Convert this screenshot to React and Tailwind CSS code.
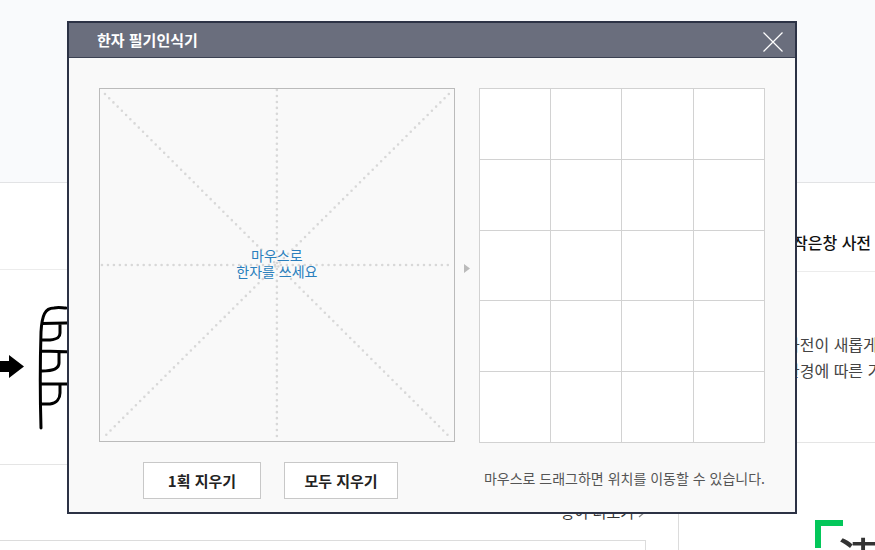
import React from 'react';

const guideLines = [
  { x1: 5, y1: 5, x2: 351, y2: 349 },
  { x1: 351, y1: 5, x2: 5, y2: 349 },
  { x1: 178, y1: 1, x2: 178, y2: 352 },
  { x1: 2, y1: 177, x2: 354, y2: 177 }
];

const CloseIcon = () => (
  <svg className="block h-5 w-5" viewBox="0 0 20 20" fill="none" stroke="currentColor" strokeWidth="1.2">
    <path d="M0.5 0.5L19.5 19.5M19.5 0.5L0.5 19.5" />
  </svg>
);

const Glyph = () => (
  <svg className="block h-[126px] w-[90px]" viewBox="0 0 90 126" fill="none">
    <path d="M0 56H9V50L24 61.5L9 73V67H0Z" fill="#000" />
    <path
      d="M41 123C40 90 40 60 41 27C42 10 45 3 54 3C59 2 62 3 66 3M42 18.5L90 17.5M42 35H50C58 34 60 32 60 28V19M42 46L90 47.5M42 66C54 66 59 63 59 58V48M42 79H90M42 99H50C57 98 60 93 60 88V80"
      stroke="#000"
      strokeWidth="3"
      strokeLinecap="round"
    />
  </svg>
);

const PageBehind = () => (
  <div>
    <div className="h-[183px] border-b border-[#e2e3e5] bg-[#f9fafc]" />
    <div className="flex">
      <main className="min-w-0 flex-1">
        <div className="h-[87px] border-b border-[#ececec]" />
        <div className="flex h-[195px] items-center border-b border-[#e5e5e5] pt-0.5">
          <Glyph />
        </div>
        <div className="pr-8 pt-[37px]">
          <div className="flex justify-end">
            <a href="#more" className="flex items-center gap-1 text-[15px] leading-5 text-[#333]">
              용어 더보기
              <svg className="h-3 w-2" viewBox="0 0 8 12" fill="none" stroke="#888" strokeWidth="1.3">
                <path d="M1 1L7 6L1 11" />
              </svg>
            </a>
          </div>
          <div className="mt-[18px] h-40 border-r border-t border-[#dcdcdc]" />
        </div>
      </main>
      <aside className="w-[197px] overflow-hidden whitespace-nowrap border-l border-[#dcdcdc]">
        <h2 className="flex h-[89px] items-center border-b border-[#ececec] pl-[114px] pt-[30px] text-base font-medium leading-6 text-[#111]">
          작은창 사전
        </h2>
        <p className="h-[171px] border-b border-[#e5e5e5] pl-[106px] pt-[59px] text-base leading-[26px] text-[#444]">
          사전이 새롭게
          <br />
          환경에 따른 기
        </p>
        <div className="flex pl-[136px] pt-[77px]">
          <div className="h-7 w-7 shrink-0 border-l-[6px] border-t-[6px] border-[#03c75a]" />
          <span className="-ml-2 pt-2.5 text-[58px] leading-[64px] text-[#333]">漢</span>
        </div>
      </aside>
    </div>
  </div>
);

const DrawingPad = () => (
  <div className="relative h-[354px] flex-[356_1_0%] border border-[#bbb]">
    <svg
      className="block h-full w-full"
      viewBox="0 0 356 354"
      preserveAspectRatio="none"
      stroke="#d8d8d8"
      strokeWidth="2.6"
      strokeLinecap="round"
      strokeDasharray="0 6"
    >
      {guideLines.map((line, i) => (
        <line key={i} {...line} />
      ))}
    </svg>
    <p className="absolute inset-0 flex items-center justify-center pb-1 text-center text-sm leading-4 text-[#2a7fbd]">
      <span>
        마우스로
        <br />
        한자를 쓰세요
      </span>
    </p>
  </div>
);

const Candidates = () => (
  <div className="grid h-[355px] flex-[286_1_0%] grid-cols-4 grid-rows-5 gap-px border border-[#d2d2d2] bg-[#d2d2d2]">
    {Array.from({ length: 20 }, (_, i) => (
      <div key={i} className="bg-white" />
    ))}
  </div>
);

const buttonClass =
  'h-[37px] border border-[#c8c8c8] bg-white text-[15px] font-bold leading-5 text-[#222]';

const Recognizer = () => (
  <section
    role="dialog"
    aria-labelledby="recognizer-title"
    className="w-full max-w-[730px] border-2 border-[#2c3245] bg-[#f9f9f9]"
  >
    <header className="flex h-[35px] items-center justify-between border-b border-[#3b4152] bg-[#6a6e7d] pl-7 pr-3 text-white">
      <h1 id="recognizer-title" className="text-[15px] font-bold leading-5">
        한자 필기인식기
      </h1>
      <button type="button" aria-label="닫기" className="mt-1">
        <CloseIcon />
      </button>
    </header>

    <div className="px-[30px] pb-[13px] pt-[30px]">
      <div className="flex items-start">
        <DrawingPad />
        <div className="flex w-6 justify-center self-center pt-1.5">
          <svg className="h-[9px] w-[6px]" viewBox="0 0 6 9" fill="#bbb">
            <path d="M0 0L6 4.5L0 9Z" />
          </svg>
        </div>
        <Candidates />
      </div>

      <div className="mt-[19px] flex items-center justify-between">
        <div className="flex gap-[23px] pl-11">
          <button type="button" className={`${buttonClass} w-[118px]`}>
            1획 지우기
          </button>
          <button type="button" className={`${buttonClass} w-[114px]`}>
            모두 지우기
          </button>
        </div>
        <p className="pb-1.5 text-sm leading-5 text-[#555]">마우스로 드래그하면 위치를 이동할 수 있습니다.</p>
      </div>
    </div>
  </section>
);

const App = () => {
  return (
    <div
      lang="ko"
      className="relative h-screen overflow-hidden bg-white font-['Noto_Sans_CJK_KR',sans-serif]"
    >
      <PageBehind />
      <div className="absolute inset-x-0 top-0 pl-[67px] pr-[78px] pt-[21px]">
        <Recognizer />
      </div>
    </div>
  );
};

export default App;
